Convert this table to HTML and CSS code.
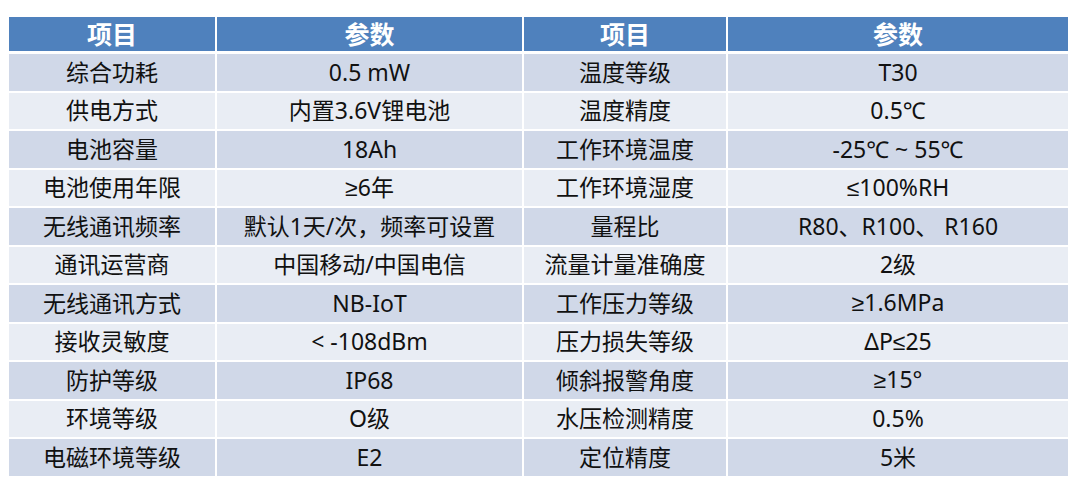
FILE: index.html
```html
<!DOCTYPE html>
<html lang="zh-CN">
<head>
<meta charset="utf-8">
<title>参数表</title>
<link rel="stylesheet" href="styles.css">
</head>
<body>
<table class="spec">
  <colgroup>
    <col class="c1"><col class="c2"><col class="c3"><col class="c4">
  </colgroup>
  <thead>
    <tr><th>项目</th><th>参数</th><th>项目</th><th>参数</th></tr>
  </thead>
  <tbody>
    <tr><td>综合功耗</td><td>0.5 mW</td><td>温度等级</td><td>T30</td></tr>
    <tr><td>供电方式</td><td>内置3.6V锂电池</td><td>温度精度</td><td>0.5℃</td></tr>
    <tr><td>电池容量</td><td>18Ah</td><td>工作环境温度</td><td>-25℃ ~ 55℃</td></tr>
    <tr><td>电池使用年限</td><td><span class="sym">≥</span>6年</td><td>工作环境湿度</td><td><span class="sym">≤</span>100%RH</td></tr>
    <tr><td>无线通讯频率</td><td>默认1天/次，频率可设置</td><td>量程比</td><td>R80、R100、 R160</td></tr>
    <tr><td>通讯运营商</td><td>中国移动/中国电信</td><td>流量计量准确度</td><td>2级</td></tr>
    <tr><td>无线通讯方式</td><td>NB-IoT</td><td>工作压力等级</td><td><span class="sym">≥</span>1.6MPa</td></tr>
    <tr><td>接收灵敏度</td><td>&lt; -108dBm</td><td>压力损失等级</td><td>ΔP<span class="sym">≤</span>25</td></tr>
    <tr><td>防护等级</td><td>IP68</td><td>倾斜报警角度</td><td><span class="sym">≥</span>15°</td></tr>
    <tr><td>环境等级</td><td>O级</td><td>水压检测精度</td><td>0.5%</td></tr>
    <tr><td>电磁环境等级</td><td>E2</td><td>定位精度</td><td>5米</td></tr>
  </tbody>
</table>
</body>
</html>
```

FILE: styles.css
```css
html, body {
  margin: 0;
  padding: 0;
  background: #ffffff;
}
body {
  padding: 15px 0 0 7px;
  font-family: "Noto Sans", "Noto Sans CJK SC", sans-serif;
  color: #111111;
}
.spec {
  border-collapse: collapse;
  table-layout: fixed;
  width: 1061px;
}
.c1 { width: 208px; }
.c2 { width: 307px; }
.c3 { width: 204px; }
.c4 { width: 342px; }
.spec th, .spec td {
  border: 2px solid #ffffff;
  text-align: center;
  vertical-align: middle;
  padding: 0;
  white-space: nowrap;
  font-size: 23px;
  line-height: 1;
}
.spec th {
  background: #4f81bd;
  color: #ffffff;
  font-weight: 700;
  font-size: 25px;
  height: 34px;
  border-bottom-width: 3px;
}
.spec td {
  height: 36.5px;
}
.spec tbody tr:nth-child(odd) td { background: #d0d8e8; }
.spec tbody tr:nth-child(even) td { background: #e9edf4; }
.sym {
  font-family: "Liberation Sans", sans-serif;
}
```
